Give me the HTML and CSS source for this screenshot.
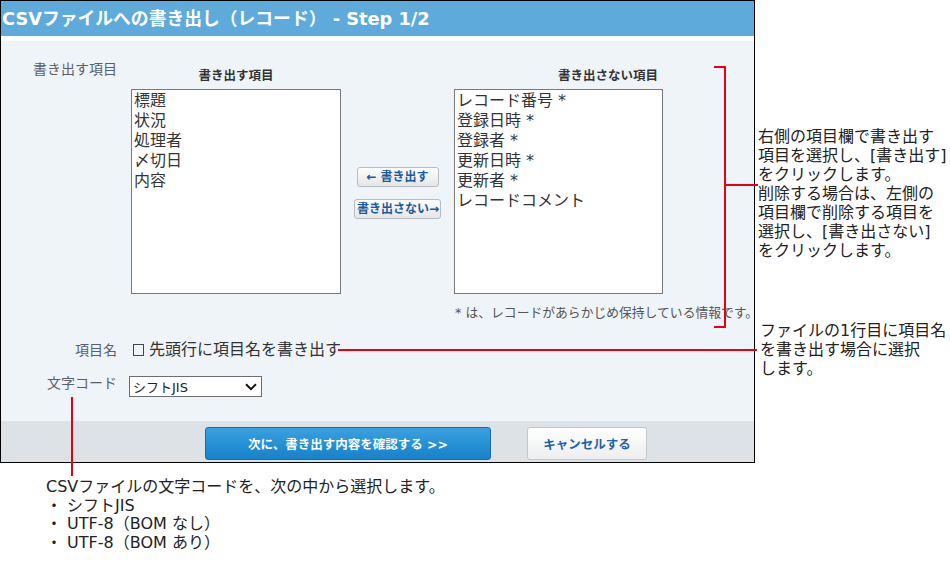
FILE: index.html
```html
<!DOCTYPE html>
<html lang="ja">
<head>
<meta charset="utf-8">
<title>CSVファイルへの書き出し</title>
<link rel="stylesheet" href="styles.css">
</head>
<body>
<div class="stage">
  <div class="window">
    <div class="titlebar">CSVファイルへの書き出し（レコード） - Step 1/2</div>
    <div class="panel">
      <div class="row row-items">
        <div class="label">書き出す項目</div>
        <div class="field">
          <div class="picker">
            <div class="col col-left">
              <div class="col-head">書き出す項目</div>
              <div class="listbox">
                <div>標題</div>
                <div>状況</div>
                <div>処理者</div>
                <div>〆切日</div>
                <div>内容</div>
              </div>
            </div>
            <div class="col-mid">
              <button class="mini mini-add" type="button">← 書き出す</button>
              <button class="mini mini-remove" type="button">書き出さない→</button>
            </div>
            <div class="col col-right">
              <div class="col-head col-head-right">書き出さない項目</div>
              <div class="listbox listbox-right">
                <div>レコード番号 *</div>
                <div>登録日時 *</div>
                <div>登録者 *</div>
                <div>更新日時 *</div>
                <div>更新者 *</div>
                <div>レコードコメント</div>
              </div>
              <div class="note">* は、レコードがあらかじめ保持している情報です。</div>
            </div>
          </div>
        </div>
      </div>
      <div class="row row-check">
        <div class="label">項目名</div>
        <div class="field check"><span class="cbox"></span>先頭行に項目名を書き出す</div>
      </div>
      <div class="row row-select">
        <div class="label label-top">文字コード</div>
        <div class="field">
          <div class="select">
            <span>シフトJIS</span>
            <svg class="chev" width="12" height="8" viewBox="0 0 12 8"><path d="M1 1.2 L6 6.2 L11 1.2" fill="none" stroke="#111" stroke-width="2"/></svg>
          </div>
        </div>
      </div>
    </div>
    <div class="footer">
      <button class="btn btn-primary" type="button">次に、書き出す内容を確認する &gt;&gt;</button>
      <button class="btn btn-cancel" type="button">キャンセルする</button>
    </div>
  </div>

  <div class="red bracket-v"></div>
  <div class="red bracket-top"></div>
  <div class="red bracket-bottom"></div>
  <div class="red bracket-mid"></div>
  <div class="red check-line"></div>
  <div class="red code-line"></div>

  <div class="note-text note-a">右側の項目欄で書き出す<br>項目を選択し、[書き出す]<br>をクリックします。<br>削除する場合は、左側の<br>項目欄で削除する項目を<br>選択し、[書き出さない]<br>をクリックします。</div>
  <div class="note-text note-b">ファイルの1行目に項目名<br>を書き出す場合に選択<br>します。</div>
  <div class="note-text note-c">CSVファイルの文字コードを、次の中から選択します。<br>・ シフトJIS<br>・ UTF-8（BOM なし）<br>・ UTF-8（BOM あり）</div>
</div>
</body>
</html>
```
FILE: styles.css
```css
* { box-sizing: border-box; }
html, body { margin: 0; padding: 0; background: #fff; }
body {
  font-family: "DejaVu Sans", "Noto Sans CJK JP", sans-serif;
  color: #222;
}
.stage {
  position: relative;
  width: 950px;
  height: 562px;
  overflow: hidden;
}
.window {
  width: 755px;
  height: 463px;
  border: 1px solid #000;
  background: #fff;
  display: flex;
  flex-direction: column;
}
.titlebar {
  height: 35px;
  line-height: 35px;
  background: #5eabdb;
  color: #fff;
  font-weight: bold;
  font-size: 17.8px;
  padding-left: 1px;
  white-space: nowrap;
  margin-bottom: 5px;
}
.panel {
  height: 380px;
  background: #eff4f8;
  padding-top: 19px;
}
.row {
  display: grid;
  grid-template-columns: 116px 1fr;
  column-gap: 12px;
}
.label {
  text-align: right;
  font-size: 14px;
  line-height: 18px;
  color: #56616d;
  white-space: nowrap;
}
.picker {
  display: flex;
  align-items: flex-start;
  margin-top: 8px;
}
.col-left { width: 210px; margin-left: 2px; }
.col-right { width: 209px; }
.col-head {
  font-size: 12.5px;
  line-height: 16px;
  font-weight: bold;
  color: #333;
  text-align: center;
  margin-bottom: 5px;
  white-space: nowrap;
}
.col-head-right { text-align: right; padding-right: 5px; }
.listbox {
  height: 205px;
  border: 1px solid #7a7a7a;
  background: #fff;
  padding: 1px 2px;
  font-size: 16px;
  line-height: 20px;
  color: #333;
  white-space: nowrap;
}
.col-mid {
  width: 113px;
  margin-top: 99px;
  display: flex;
  flex-direction: column;
  align-items: center;
  gap: 12px;
}
.mini {
  height: 20px;
  padding: 0 2px;
  font-family: inherit;
  font-size: 12px;
  font-weight: bold;
  color: #1a5a9c;
  background: linear-gradient(#fdfdfd, #e4e6e8);
  border: 1px solid #b9bcbf;
  border-radius: 3px;
  white-space: nowrap;
  line-height: 18px;
}
.mini-add { width: 82px; }
.mini-remove { width: 87px; }
.note {
  margin-top: 11px;
  font-size: 12.8px;
  line-height: 16px;
  color: #555;
  white-space: nowrap;
  padding-left: 1px;
}
.row-check {
  margin-top: 19px;
  align-items: center;
}
.check {
  font-size: 16px;
  line-height: 20px;
  color: #333;
  display: flex;
  align-items: center;
  padding-left: 4px;
  white-space: nowrap;
}
.cbox {
  display: inline-block;
  width: 11px;
  height: 12px;
  border: 1px solid #444;
  margin-right: 5px;
}
.row-select { margin-top: 16px; }
.label-top { line-height: 14px; }
.select {
  width: 133px;
  height: 21px;
  border: 1px solid #6d6d6d;
  background: #fff;
  display: flex;
  align-items: center;
  justify-content: space-between;
  padding: 0 4px 0 3px;
  font-size: 13px;
  color: #222;
}
.footer {
  height: 41px;
  background: #dde2e6;
  display: flex;
  align-items: flex-start;
  gap: 36px;
  padding: 6px 0 0 204px;
}
.btn {
  height: 33px;
  font-family: inherit;
  font-weight: bold;
  font-size: 12.5px;
  border-radius: 3px;
  white-space: nowrap;
}
.btn-primary {
  width: 286px;
  color: #fff;
  background: linear-gradient(#3aa0e0, #1682ca);
  border: 1px solid #1a6ea8;
}
.btn-cancel {
  width: 120px;
  color: #1d63a8;
  background: linear-gradient(#ffffff, #eceeef);
  border: 1px solid #c3c7ca;
}
.red { position: absolute; background: #e60012; }
.bracket-v { left: 724px; top: 66px; width: 2px; height: 262px; }
.bracket-top { left: 714px; top: 66px; width: 12px; height: 2px; }
.bracket-bottom { left: 714px; top: 326px; width: 12px; height: 2px; }
.bracket-mid { left: 726px; top: 184px; width: 32px; height: 2px; }
.check-line { left: 338px; top: 349px; width: 419px; height: 2px; }
.code-line { left: 71px; top: 397px; width: 2px; height: 79px; }
.note-text {
  position: absolute;
  font-size: 16px;
  line-height: 19px;
  color: #222;
  white-space: nowrap;
}
.note-a { left: 758px; top: 127px; }
.note-b { left: 760px; top: 321px; }
.note-c { left: 46px; top: 478px; line-height: 18.5px; }
```
